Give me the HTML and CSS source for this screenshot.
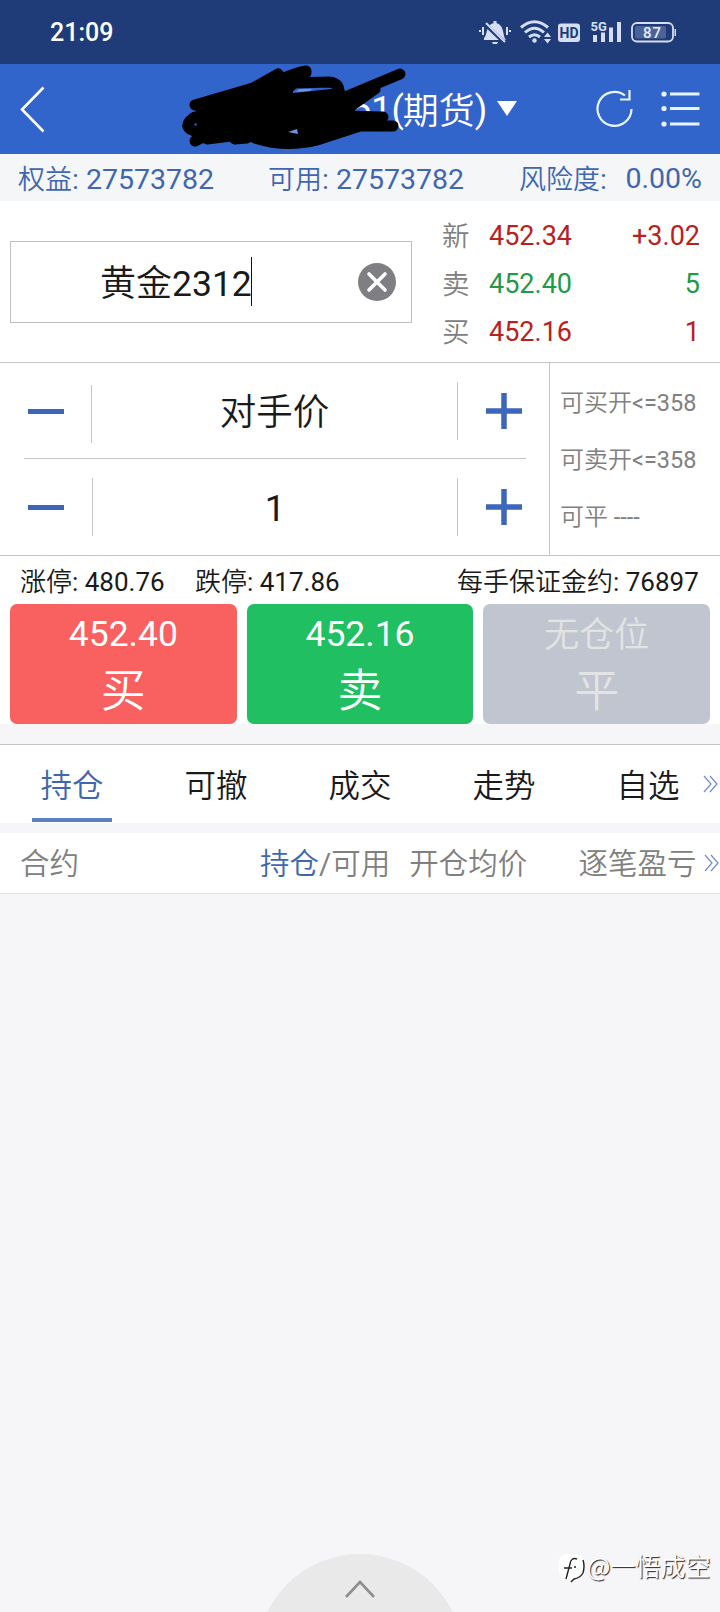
FILE: index.html
```html
<!DOCTYPE html>
<html lang="zh-CN">
<head>
    <meta charset="UTF-8">
    <meta name="viewport" content="width=device-width, initial-scale=1.0">
    <title>期货交易</title>
    <link rel="stylesheet" href="styles.css">
</head>
<body>
    <div class="status">
        <span class="time">21:09</span>
        <svg class="status-icons" width="202" height="30" viewBox="0 0 202 30">
            <!-- muted bell -->
            <g fill="#d5def5">
                <path d="M9 21 C13 18 10 7 20 6 C30 7 27 18 31 23 H9Z"/>
                <rect x="18.500" y="4" width="3" height="3"/>
                <path d="M17 25h6l-1 2h-4z"/>
                <rect x="4" y="13" width="2" height="2"/><rect x="7" y="10" width="2" height="8"/>
                <rect x="31" y="10" width="2" height="8"/><rect x="34" y="13" width="2" height="2"/>
            </g>
            <path d="M10 7 L30 26" stroke="#203c78" stroke-width="4"/>
            <path d="M11 6 L30 25" stroke="#d5def5" stroke-width="2"/>
            <!-- wifi -->
            <g fill="none" stroke="#d5def5" stroke-width="3">
                <path d="M46 10.500 Q59.500 -1 73 10.500"/>
                <path d="M50 15.500 Q59.500 7 69 15.500"/>
                <path d="M54 20 Q59.500 15.500 65 20"/>
            </g>
            <circle cx="59.500" cy="23.500" r="2.200" fill="#d5def5"/>
            <path d="M72.500 15.500l3.500 4.500h-7zM72.500 26.500l3.500-4.500h-7z" fill="#d5def5"/>
            <!-- HD -->
            <rect x="83" y="6.500" width="22" height="18.500" rx="3" fill="#d5def5"/>
            <text x="94" y="21" class="hd">HD</text>
            <!-- signal -->
            <text x="115.500" y="13.500" class="net">5G</text>
            <g fill="#d5def5">
                <rect x="118" y="18" width="4" height="7"/><rect x="126" y="15.500" width="4" height="9.500"/>
                <rect x="134" y="10.500" width="4" height="14.500"/><rect x="142" y="5" width="4" height="20"/>
            </g>
            <!-- battery -->
            <rect x="157" y="6" width="41" height="18.500" rx="5" fill="none" stroke="#d5def5" stroke-width="1.800"/>
            <rect x="160" y="9" width="31" height="12.500" rx="2" fill="#4c629a"/>
            <text x="177.500" y="20.800" class="bat">87</text>
            <rect x="199.500" y="12" width="1.500" height="7" fill="#d5def5"/>
        </svg>
    </div>

    <div class="header">
        <svg class="back" width="26" height="48" viewBox="0 0 26 48"><path d="M23.500 1.500 L2 23.500 L23.500 45.500" fill="none" stroke="#fff" stroke-width="2.600"/></svg>
        <div class="title"><span class="tnum">51</span><span class="tnum">(</span><span class="kind">期货</span><span class="tnum">)</span><i class="caret-down"></i></div>
        <svg class="refresh" width="40" height="40" viewBox="0 0 40 40">
            <path d="M30 7.500 A17 17 0 1 0 36.500 21" fill="none" stroke="#e8f4ff" stroke-width="2.200"/>
            <path d="M34.500 2 V11.500 H25" fill="none" stroke="#e8f4ff" stroke-width="2.200"/>
        </svg>
        <svg class="menu" width="40" height="38" viewBox="0 0 40 38">
            <g fill="#e8f4ff">
                <circle cx="3" cy="4" r="2.600"/><circle cx="3" cy="18.500" r="2.600"/><circle cx="3" cy="34" r="2.600"/>
                <rect x="9" y="2.500" width="29.500" height="3"/><rect x="9" y="17" width="29.500" height="3"/><rect x="9" y="32.500" width="29.500" height="3"/>
            </g>
        </svg>
        <svg class="scribble" width="240" height="90" viewBox="0 0 240 90">
            <path d="M20 36 L75 22 L100 12 L118 24 L118 29 L165 24 L172 28 L180 42 L180 66 L150 76 L90 76 L60 78 L22 68Z"/>
            <g fill="none" stroke="#000" stroke-width="11" stroke-linecap="round" stroke-linejoin="round">
                <path d="M20 41 L78 24 L103 10 L107 15 Q120 9 131 7 Q132 14 114 21"/>
                <path d="M104 26 Q112 26 119 19 L154 18 Q164 19 164 28"/>
                <path d="M20 53 Q9 60 15 65 L30 72 L20 77 M32 75 L72 70 M60 75 L72 74"/>
                <path d="M80 74 Q110 84 142 76 L185 62 L218 62"/>
                <path d="M170 33 L225 10 M172 36 L200 25 L176 42"/>
                <path d="M170 52 L208 53 M168 60 L190 55"/>
            </g>
            <path d="M121 28l3-3 13 0-2 2zM113 68l9-3 1 5z" fill="#6f93dc"/>
        </svg>
    </div>

    <div class="account">
        <span class="a1">权益<b>: 27573782</b></span>
        <span class="a2">可用<b>: 27573782</b></span>
        <span class="a3">风险度<b>:</b></span>
        <b class="risk">0.00%</b>
    </div>

    <div class="quote">
        <div class="contract">
            <span class="contract-name">黄金<b>2312</b></span><i class="cursor"></i>
            <svg class="clear" width="38" height="38" viewBox="0 0 38 38"><circle cx="19" cy="19" r="19" fill="#7e7e83"/><path d="M11 11 L27 27 M27 11 L11 27" stroke="#fff" stroke-width="3.600" stroke-linecap="round"/></svg>
        </div>
        <div class="prices">
            <div class="price-row"><span>新</span><b class="red">452.34</b><b class="red last">+3.02</b></div>
            <div class="price-row"><span>卖</span><b class="green">452.40</b><b class="green last">5</b></div>
            <div class="price-row"><span>买</span><b class="red">452.16</b><b class="red last">1</b></div>
        </div>
    </div>

    <div class="order">
        <div class="steppers">
            <div class="stepper">
                <div class="minus"><i></i></div>
                <div class="value">对手价</div>
                <div class="plus"><svg width="36" height="36"><path d="M18 0V36M0 18H36" stroke="#3b66bb" stroke-width="5.500"/></svg></div>
            </div>
            <div class="stepper second">
                <div class="minus"><i></i></div>
                <div class="value"><b>1</b></div>
                <div class="plus"><svg width="36" height="36"><path d="M18 0V36M0 18H36" stroke="#3b66bb" stroke-width="5.500"/></svg></div>
            </div>
        </div>
        <div class="avail">
            <div>可买开<b>&lt;=358</b></div>
            <div>可卖开<b>&lt;=358</b></div>
            <div>可平<b> ----</b></div>
        </div>
    </div>

    <div class="limits">
        <span class="up">涨停<b>: 480.76</b></span>
        <span class="down">跌停<b>: 417.86</b></span>
        <span class="margin">每手保证金约<b>: 76897</b></span>
    </div>

    <div class="actions">
        <div class="btn buy"><b>452.40</b><span>买</span></div>
        <div class="btn sell"><b>452.16</b><span>卖</span></div>
        <div class="btn close"><b>无仓位</b><span>平</span></div>
    </div>

    <div class="tabs">
        <div class="tab active">持仓</div>
        <div class="tab">可撤</div>
        <div class="tab">成交</div>
        <div class="tab">走势</div>
        <div class="tab">自选</div>
        <svg class="more" width="16" height="18" viewBox="0 0 16 18"><path d="M1 1L8 9L1 17M7 1L14 9L7 17" fill="none" stroke="#6f8bc8" stroke-width="1.200"/></svg>
    </div>

    <div class="list-head">
        <span class="c1">合约</span>
        <span class="c2"><em>持仓</em><b>/</b>可用</span>
        <span class="c3">开仓均价</span>
        <span class="c4">逐笔盈亏</span>
        <svg class="more" width="16" height="18" viewBox="0 0 16 18"><path d="M1 1L8 9L1 17M7 1L14 9L7 17" fill="none" stroke="#6f8bc8" stroke-width="1.200"/></svg>
    </div>

    <div class="list">
        <div class="drawer"><svg width="32" height="20" viewBox="0 0 32 20"><path d="M2 18L16 3L30 18" fill="none" stroke="#8f8f92" stroke-width="2.600"/></svg></div>
        <div class="mark">
            <svg width="26" height="30" viewBox="0 0 26 30"><rect width="25" height="25" rx="8" fill="#fff"/><path d="M18 5Q12 3 11 10L7 25M5 14H13M15 13h2M24 6Q26 12 24 19Q21 24 15 25L12 28" fill="none" stroke="#222" stroke-width="1.400"/></svg>
            <span>@一悟成空</span>
        </div>
    </div>
</body>
</html>
```
FILE: styles.css
```css
* { box-sizing: border-box; }
body { margin: 0; width: 720px; height: 1612px; overflow: hidden; display: flex; flex-direction: column; background: #f6f6f8; color: #1a1a1a; font-family: "Noto Sans CJK SC", sans-serif; font-weight: 350; }
b { font-family: Roboto, sans-serif; font-weight: 400; white-space: pre; }
svg { display: block; flex: none; }
em, i { font-style: normal; }

.status { height: 64px; background: #203c78; display: flex; padding: 17px 0 0 50px; }
.time { width: 425px; font: 500 25px/31px Roboto, sans-serif; color: #fff; }
.hd { font: 700 14px Roboto, sans-serif; fill: #203c78; text-anchor: middle; }
.net { font: 700 13px Roboto, sans-serif; fill: #d5def5; }
.bat { font: 500 15px Roboto, sans-serif; fill: #e8eefb; text-anchor: middle; letter-spacing: 1px; }

.header { position: relative; height: 90px; background: #3265cb; display: flex; color: #fff; }
.back { margin: 22px 0 0 20px; }
.title { width: 546px; padding-left: 305px; display: flex; font-size: 36px; line-height: 92px; }
.tnum { font-family: Roboto, sans-serif; font-weight: 400; }
.kind { margin-left: -1px; line-height: 89px; }
.caret-down { margin: 37px 0 0 10px; width: 0; height: 0; border: 10px solid transparent; border-top: 15px solid #fff; border-bottom: 0; }
.refresh { margin: 24px 0 0 3px; }
.menu { margin: 26px 0 0 26px; }
.scribble { position: absolute; left: 175px; top: 0; }

.account { height: 47px; background: #f5f6f8; display: flex; color: #3f67b0; font-size: 27px; line-height: 47px; white-space: nowrap; }
.account b { font-size: 28.500px; }
.a1 { padding-left: 18px; width: 268px; }
.a2 { width: 251px; }
.account .risk { margin-left: auto; padding-right: 18px; line-height: 49px; }

.quote { height: 162px; background: #fff; border-bottom: 1px solid #c4c4c6; display: flex; }
.contract { flex: none; width: 402px; height: 82px; margin: 40px 0 0 10px; border: 1px solid #c0c0c2; display: flex; padding-left: 89px; font-size: 36px; line-height: 77px; }
.contract-name { width: 151px; white-space: nowrap; }
.contract-name b { font-size: 35.500px; }
.cursor { width: 1px; height: 49px; margin-top: 15px; background: #111; }
.clear { margin: 21px 0 0 106px; }
.prices { flex: 1; margin: 11px 0 0 30px; }
.price-row { height: 48px; display: flex; line-height: 48px; font-size: 27.500px; color: #808080; }
.price-row span { width: 47px; line-height: 45px; }
.price-row b { font-size: 27px; }
.price-row .red { color: #b92020; }
.price-row .green { color: #23994a; }
.price-row .last { flex: 1; text-align: right; padding-right: 20px; }

.order { height: 193px; background: #fff; border-bottom: 1px solid #c4c4c6; display: flex; }
.steppers { flex: none; width: 550px; border-right: 1px solid #c4c4c6; padding-left: 24px; }
.stepper { height: 96px; width: 502px; border-bottom: 1px solid #c4c4c6; display: flex; }
.stepper.second { border-bottom: 0; }
.minus { width: 68px; height: 58px; margin-top: 22px; border-right: 1px solid #c4c4c6; padding: 24px 0 0 4px; }
.minus i { display: block; width: 36px; height: 5px; background: #3b66bb; }
.second .minus { width: 69px; margin-top: 19px; padding-top: 27px; }
.value { flex: 1; text-align: center; font-size: 36.500px; line-height: 93px; }
.plus { width: 69px; height: 58px; margin-top: 19px; border-left: 1px solid #c4c4c6; padding: 11px 0 0 28px; }
.avail { padding: 9px 0 0 10px; font-size: 24px; line-height: 57px; color: #808080; }
.avail div { height: 57px; }
.avail b { font-size: 23.500px; }

.limits { height: 48px; background: #fff; display: flex; font-size: 26px; line-height: 47px; white-space: nowrap; }
.up { padding-left: 20px; width: 195px; }
.down { width: 262px; }

.actions { height: 120px; background: #fff; display: flex; gap: 10px; padding: 0 10px; }
.btn { flex: 1; border-radius: 7px; text-align: center; color: #fff; display: flex; flex-direction: column; }
.btn b { height: 58px; font-size: 35.500px; line-height: 60px; }
.btn span { font-size: 45px; line-height: 52px; }
.buy { background: #f96060; }
.sell { background: #20c062; }
.close { background: #c0c5d0; color: #e2e4e4; }
.close b { font-family: "Noto Sans CJK SC", sans-serif; font-weight: 350; font-size: 35px; line-height: 55px; }

.tabs { height: 79px; margin-top: 20px; background: #fff; border-top: 1px solid #c4c4c6; display: flex; font-size: 31.500px; overflow: hidden; }
.tab { flex: none; width: 80px; height: 77px; margin: 0 32px; text-align: center; line-height: 77px; }
.active { color: #3f67b0; border-bottom: 4px solid #5b7fbf; }
.tabs .more { margin: 30px 0 0 -17px; }

.list-head { height: 61px; margin-top: 10px; background: #fff; border-bottom: 1px solid #e2e2e4; display: flex; font-size: 29.500px; line-height: 57px; color: #808080; white-space: nowrap; overflow: hidden; }
.c1 { flex: none; padding-left: 20px; width: 260px; }
.c2 { width: 150px; }
.c2 em { color: #3f67b0; }
.c3 { width: 170px; }
.c4 { width: 126px; }
.list-head .more { margin-top: 21px; }

.list { position: relative; flex: 1; overflow: hidden; }
.drawer { position: absolute; left: 257px; top: 660px; width: 206px; height: 206px; border-radius: 50%; background: #e9e9ea; padding: 25px 0 0 87px; }
.mark { position: absolute; left: 559px; top: 660px; display: flex; gap: 2px; font-size: 25px; line-height: 23px; color: #fff; text-shadow: 1px 1px 1px #222; }
```
